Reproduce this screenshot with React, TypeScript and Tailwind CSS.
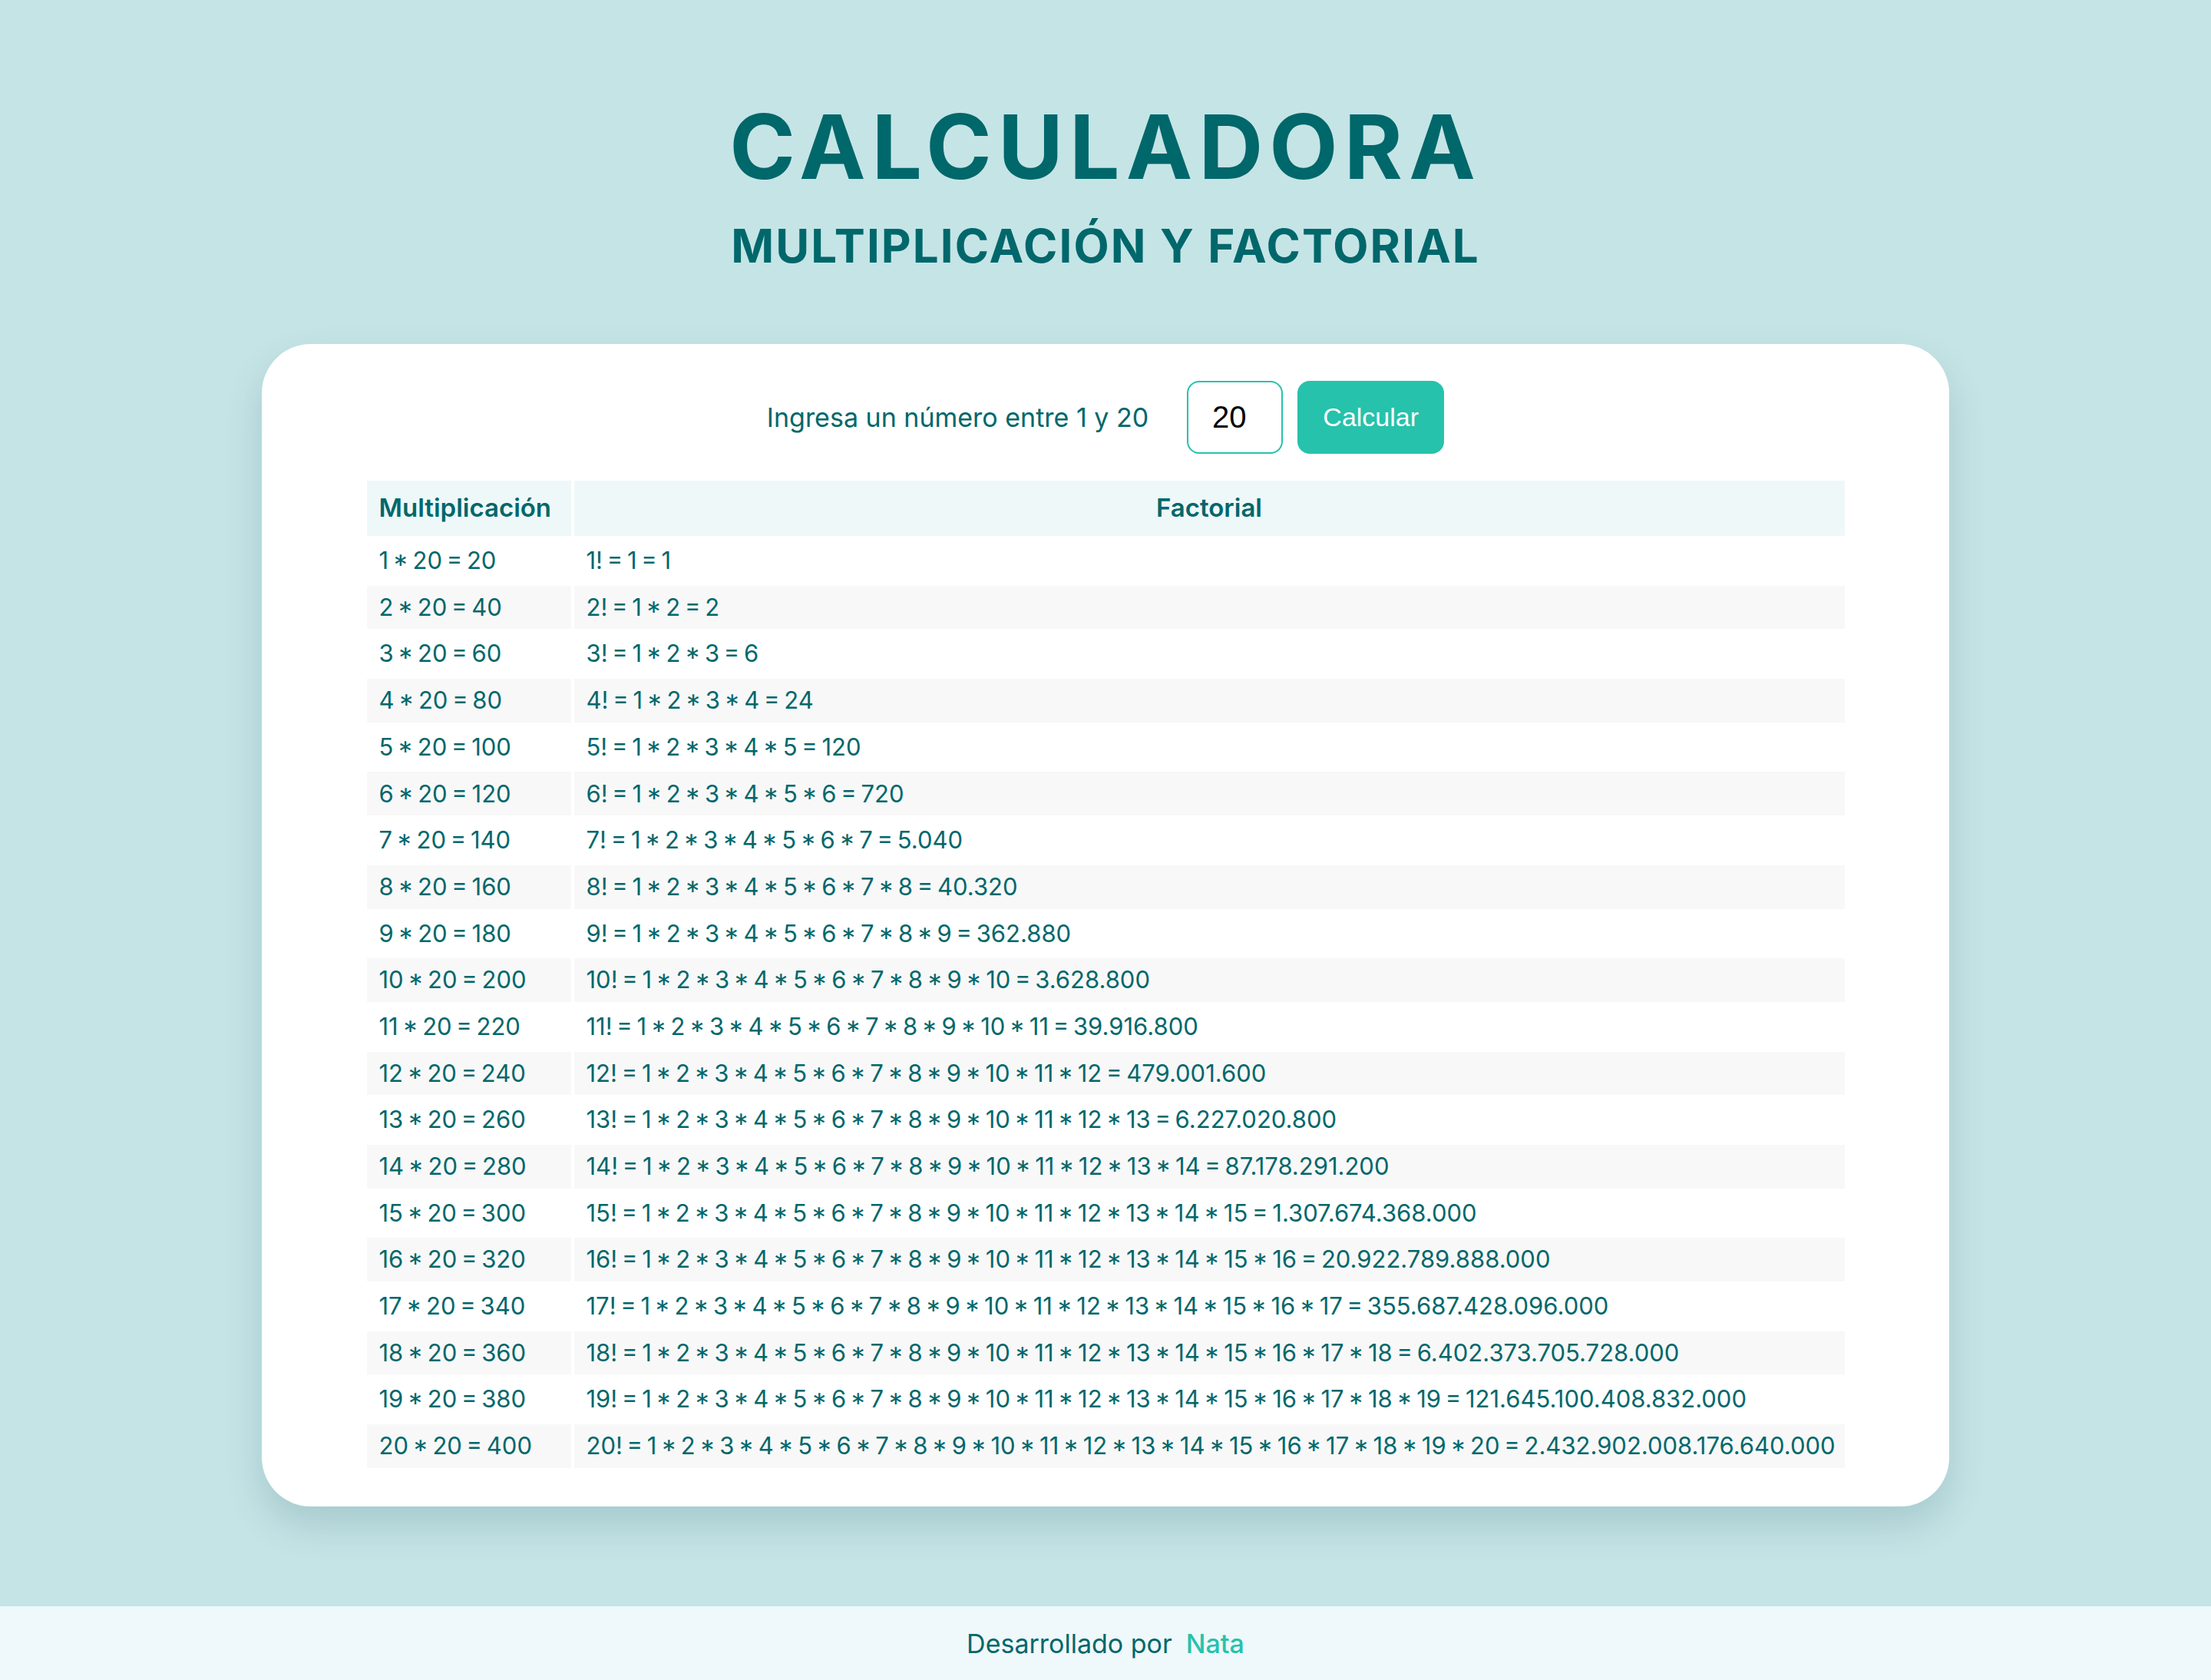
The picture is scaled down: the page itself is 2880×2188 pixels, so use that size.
import React from 'react';

const N = 20;

// es-ES style thousands separator, done by hand so BigInt works for 20!
const fmt = (v: bigint) => v.toString().replace(/\B(?=(\d{3})+(?!\d))/g, '.');

const rows = Array.from({ length: N }, (_, i) => {
  const n = i + 1;
  let f = 1n;
  const parts: string[] = [];
  for (let k = 1; k <= n; k++) {
    f *= BigInt(k);
    parts.push(String(k));
  }
  return {
    n,
    mult: `${n} * ${N} = ${n * N}`,
    fact: `${n}! = ${parts.join(' * ')} = ${fmt(f)}`,
  };
});

export default function App() {
  return (
    <div className="min-h-screen flex flex-col bg-[#c5e4e6] font-['Inter',sans-serif] text-[#00676b]">
      <main className="flex-1 flex flex-col items-center pt-[133px]">
        <h1 className="text-[116px] leading-none font-bold tracking-[0.07em]">CALCULADORA</h1>
        <h2 className="mt-[41px] text-[60px] leading-none font-bold tracking-[0.035em]">
          MULTIPLICACIÓN Y FACTORIAL
        </h2>

        <div className="mt-[98px] w-[2198px] bg-white rounded-[64px] shadow-[0_24px_50px_rgba(0,70,80,0.16)] pt-[48px] pb-[46px] flex flex-col items-center">
          <div className="flex items-center">
            <label className="text-[34px] mr-[50px]">Ingresa un número entre 1 y 20</label>
            <input
              type="number"
              defaultValue={N}
              className="w-[125px] h-[95px] border-2 border-[#26c2ac] rounded-[16px] text-center text-[40px] text-black font-['Liberation_Sans',sans-serif] outline-none"
            />
            <button className="ml-[19px] w-[191px] h-[95px] rounded-[16px] bg-[#26c2ac] text-white text-[34px] font-['Liberation_Sans',sans-serif]">
              Calcular
            </button>
          </div>

          <table className="mt-[31px] table-fixed border-separate border-spacing-1 w-[1933px] text-[31px] [word-spacing:-3px]">
            <thead>
              <tr>
                <th className="w-[266px] h-[72px] bg-[#eff8f9] px-[16px] text-left font-semibold text-[33px]">Multiplicación</th>
                <th className="h-[72px] bg-[#eff8f9] px-[16px] text-center font-semibold text-[33px]">Factorial</th>
              </tr>
            </thead>
            <tbody>
              {rows.map((r) => (
                <tr key={r.n}>
                  <td className={`h-[56.7px] px-[16px] whitespace-nowrap ${r.n % 2 === 0 ? 'bg-[#f8f8f8]' : ''}`}>{r.mult}</td>
                  <td className={`h-[56.7px] px-[16px] whitespace-nowrap ${r.n % 2 === 0 ? 'bg-[#f8f8f8]' : ''}`}>{r.fact}</td>
                </tr>
              ))}
            </tbody>
          </table>
        </div>
      </main>

      <footer className="h-[96px] bg-[#eff8fa] flex items-center justify-center text-[34px]">
        <span>Desarrollado por</span>
        <span className="ml-[18px] font-medium text-[#26c2ac]">Nata</span>
      </footer>
    </div>
  );
}
